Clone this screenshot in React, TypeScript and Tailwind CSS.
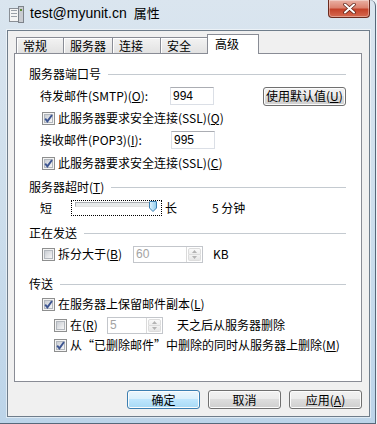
import type { ReactNode } from "react";

const Check = ({ on }: { on?: boolean }) => (
  <span className="relative flex h-[13px] w-[13px] shrink-0 items-center justify-center border border-[#8e8f8f] bg-[#f4f4f4]">
    <span className="h-[9px] w-[9px] border border-[#b2b7bd] bg-gradient-to-br from-[#c9cdd3] to-[#f7f7f7]" />
    {on && (
      <svg className="absolute left-[0px] top-[0px]" width="11" height="11" viewBox="0 0 11 11">
        <path d="M2.2 5.6 L4.4 8.4 L9 2" fill="none" stroke="#3d5591" strokeWidth="1.9" />
      </svg>
    )}
  </span>
);

const Spin = ({ value, className }: { value: string; className: string }) => (
  <div className={`flex h-[17px] border border-[#c3c6cb] bg-white ${className}`}>
    <span className="flex flex-1 items-center pl-[2px] font-['Liberation_Sans',sans-serif] text-[12px] leading-none text-[#a3a3a3]">
      {value}
    </span>
    <div className="flex w-[16px] flex-col border-l border-[#dadada] p-[1px]">
      <span className="flex flex-1 items-center justify-center rounded-t-[2px] border border-[#dcdcdc] bg-gradient-to-b from-[#fafafa] to-[#ededed]">
        <svg width="5" height="3" viewBox="0 0 5 3">
          <path d="M0 3 L2.5 0 L5 3Z" fill="#b3b3b3" />
        </svg>
      </span>
      <span className="flex flex-1 items-center justify-center rounded-b-[2px] border border-t-0 border-[#dcdcdc] bg-gradient-to-b from-[#f3f3f3] to-[#e6e6e6]">
        <svg width="5" height="3" viewBox="0 0 5 3">
          <path d="M0 0 L2.5 3 L5 0Z" fill="#b3b3b3" />
        </svg>
      </span>
    </div>
  </div>
);

const Group = ({ children, className }: { children: ReactNode; className: string }) => (
  <div className={`flex h-[20px] items-center gap-[7px] ${className}`}>
    <span className="leading-none">{children}</span>
    <div className="h-px flex-1 bg-[#c4cad0]" />
  </div>
);

const Btn = ({ children, primary, className = "" }: { children: ReactNode; primary?: boolean; className?: string }) => (
  <button
    className={`flex h-[19px] items-center justify-center rounded-[3px] border text-[12px] leading-none shadow-[inset_0_0_0_1px_#fcfcfc] ${
      primary
        ? "border-[#3c7fb1] bg-[linear-gradient(180deg,#eaf6fd_0%,#d9f0fc_50%,#bee6fd_50%,#a7d9f5_100%)]"
        : "border-[#707070] bg-[linear-gradient(180deg,#f2f2f2_0%,#ebebeb_50%,#dddddd_50%,#cfcfcf_100%)]"
    } ${className}`}
  >
    {children}
  </button>
);

const Tab = ({ label, w, first }: { label: string; w: string; first?: boolean }) => (
  <div
    className={`flex h-[16px] items-center border border-b-0 border-[#898c95] bg-gradient-to-b from-[#f3f3f3] to-[#e2e2e2] pl-[6px] leading-none shadow-[inset_1px_1px_0_#ffffff] ${w} ${
      first ? "" : "-ml-px"
    }`}
  >
    {label}
  </div>
);

const Row = ({ children, className }: { children: ReactNode; className: string }) => (
  <div className={`flex h-[20px] items-center ${className}`}>{children}</div>
);

export default function App() {
  return (
    <div className="h-[424px] w-[377px] bg-[#eef2f6] font-['Noto_Sans_CJK_SC',sans-serif] text-[12px] text-black">
      <div className="flex h-full w-[376px] flex-col rounded-tr-[6px] border-r border-b border-[#56687a] bg-gradient-to-b from-[#dae5ef] via-[#cddeec] to-[#bcd4e9]">
        {/* title bar */}
        <div className="flex h-[30px] shrink-0 items-start">
          <svg className="ml-[9px] mt-[6px]" width="15" height="17" viewBox="0 0 15 17">
            <rect x="0.5" y="2.5" width="9" height="13" fill="#f4f4f4" stroke="#8a8f96" />
            <rect x="2" y="4" width="6" height="1" fill="#9aa0a8" />
            <rect x="2" y="7" width="6" height="1" fill="#9aa0a8" />
            <rect x="2" y="10" width="6" height="1" fill="#9aa0a8" />
            <rect x="9.5" y="0.5" width="5" height="16" fill="#c9ccd1" stroke="#7d838b" />
            <rect x="11" y="3" width="2" height="2" fill="#5d8a3a" />
          </svg>
          <div className="ml-[6px] mt-[6px] flex items-baseline">
            <span className="font-['Liberation_Sans',sans-serif] text-[14px] leading-none text-black">
              test@myunit.cn
            </span>
            <span className="ml-[7px] text-[13px] leading-none">属性</span>
          </div>
          <button className="ml-auto mr-[5px] flex h-[18px] w-[42px] items-center justify-center rounded-b-[4px] border border-t-0 border-[#6b2a1e] bg-[linear-gradient(180deg,#eab1a4_0%,#dc8370_45%,#c4422a_55%,#d66a51_100%)] shadow-[inset_0_0_0_1px_rgba(255,255,255,0.35)]">
            <svg width="13" height="11" viewBox="0 0 13 11">
              <path d="M2 1.5 L11 9.5 M11 1.5 L2 9.5" stroke="#5a1f15" strokeWidth="3.4" strokeLinecap="round" />
              <path d="M2 1.5 L11 9.5 M11 1.5 L2 9.5" stroke="#ffffff" strokeWidth="2" strokeLinecap="round" />
            </svg>
          </button>
        </div>

        {/* client area */}
        <div className="mb-[6px] ml-[7px] mr-[5px] flex flex-1 flex-col border border-[#6f7d8b] bg-[#f0f0f0] pl-[6px] pr-[7px] pt-[3px] shadow-[0_0_0_1px_rgba(255,255,255,0.5)]">
          {/* tabs */}
          <div className="flex h-[19px] items-end pl-[2px]">
            <Tab label="常规" w="w-[48px]" first />
            <Tab label="服务器" w="w-[50px]" />
            <Tab label="连接" w="w-[49px]" />
            <Tab label="安全" w="w-[48px]" />
            <div className="relative z-10 -mb-px -ml-px flex h-[20px] w-[52px] items-start border border-b-0 border-[#898c95] bg-white pl-[7px] pt-[3px] leading-none">
              高级
            </div>
          </div>

          {/* panel */}
          <div className="flex h-[329px] flex-col border border-[#898c95] bg-white pl-[14px] pr-[15px]">
            <Group className="mt-[10px]">服务器端口号</Group>

            <Row className="ml-[11px] mt-[2px]">
              <span className="w-[131px] leading-none">
                待发邮件(SMTP)(<u>O</u>):
              </span>
              <div className="flex h-[18px] w-[44px] items-center border border-[#dbdfe6] border-t-[#abadb3] pl-[2px] font-['Liberation_Sans',sans-serif] leading-none">
                994
              </div>
              <Btn className="ml-[49px] w-[84px]">
                使用默认值(<u>U</u>)
              </Btn>
            </Row>

            <Row className="ml-[13px] mt-[2px] gap-[3px]">
              <Check on />
              <span className="leading-none">
                此服务器要求安全连接(SSL)(<u>Q</u>)
              </span>
            </Row>

            <Row className="ml-[11px] mt-[2px]">
              <span className="w-[131px] leading-none">
                接收邮件(POP3)(<u>I</u>):
              </span>
              <div className="flex h-[18px] w-[44px] items-center border border-[#dbdfe6] border-t-[#abadb3] pl-[2px] font-['Liberation_Sans',sans-serif] leading-none">
                995
              </div>
            </Row>

            <Row className="ml-[13px] mt-[3px] gap-[3px]">
              <Check on />
              <span className="leading-none">
                此服务器要求安全连接(SSL)(<u>C</u>)
              </span>
            </Row>

            <Group className="mt-[4px]">
              服务器超时(<u>T</u>)
            </Group>

            <Row className="ml-[11px] mt-[1px]">
              <span className="w-[31px] leading-none">短</span>
              <div className="relative h-[16px] w-[91px] self-start mt-[2px] border border-dotted border-black pl-[3px] pr-[4px] pt-[1px]">
                <div className="h-[5px] border border-[#a9adb2] border-b-[#e2e2e2] border-r-[#e2e2e2] bg-[#e7eaea]" />
                <svg className="absolute right-[4px] top-[0px]" width="8" height="11" viewBox="0 0 8 11">
                  <defs>
                    <linearGradient id="th" x1="0" y1="0" x2="1" y2="0">
                      <stop offset="0" stopColor="#e3f4fd" />
                      <stop offset="1" stopColor="#8fcdef" />
                    </linearGradient>
                  </defs>
                  <path d="M1 0.5 H7 Q7.5 0.5 7.5 1 V7 L4 10.5 L0.5 7 V1 Q0.5 0.5 1 0.5Z" fill="url(#th)" stroke="#3c7fb1" />
                </svg>
              </div>
              <span className="ml-[3px] leading-none">长</span>
              <span className="ml-[35px] leading-none">5 分钟</span>
            </Row>

            <Group className="mt-[5px]">正在发送</Group>

            <Row className="ml-[13px] mt-[1px]">
              <Check />
              <span className="ml-[3px] w-[75px] leading-none">
                拆分大于(<u>B</u>)
              </span>
              <Spin value="60" className="w-[70px]" />
              <span className="ml-[10px] leading-none">KB</span>
            </Row>

            <Group className="mt-[10px]">传送</Group>

            <Row className="ml-[13px] gap-[3px]">
              <Check on />
              <span className="leading-none">
                在服务器上保留邮件副本(<u>L</u>)
              </span>
            </Row>

            <Row className="ml-[25px] mt-[1px]">
              <Check />
              <span className="ml-[3px] w-[37px] leading-none">
                在(<u>R</u>)
              </span>
              <Spin value="5" className="w-[56px]" />
              <span className="ml-[14px] leading-none">天之后从服务器删除</span>
            </Row>

            <Row className="ml-[25px] gap-[3px]">
              <Check on />
              <span className="leading-none">
                从“已删除邮件”中删除的同时从服务器上删除(<u>M</u>)
              </span>
            </Row>
          </div>

          {/* buttons */}
          <div className="mt-[8px] flex justify-end gap-[8px]">
            <Btn primary className="w-[73px]">
              确定
            </Btn>
            <Btn className="w-[73px]">取消</Btn>
            <Btn className="w-[73px]">
              应用(<u>A</u>)
            </Btn>
          </div>
        </div>
      </div>
    </div>
  );
}
